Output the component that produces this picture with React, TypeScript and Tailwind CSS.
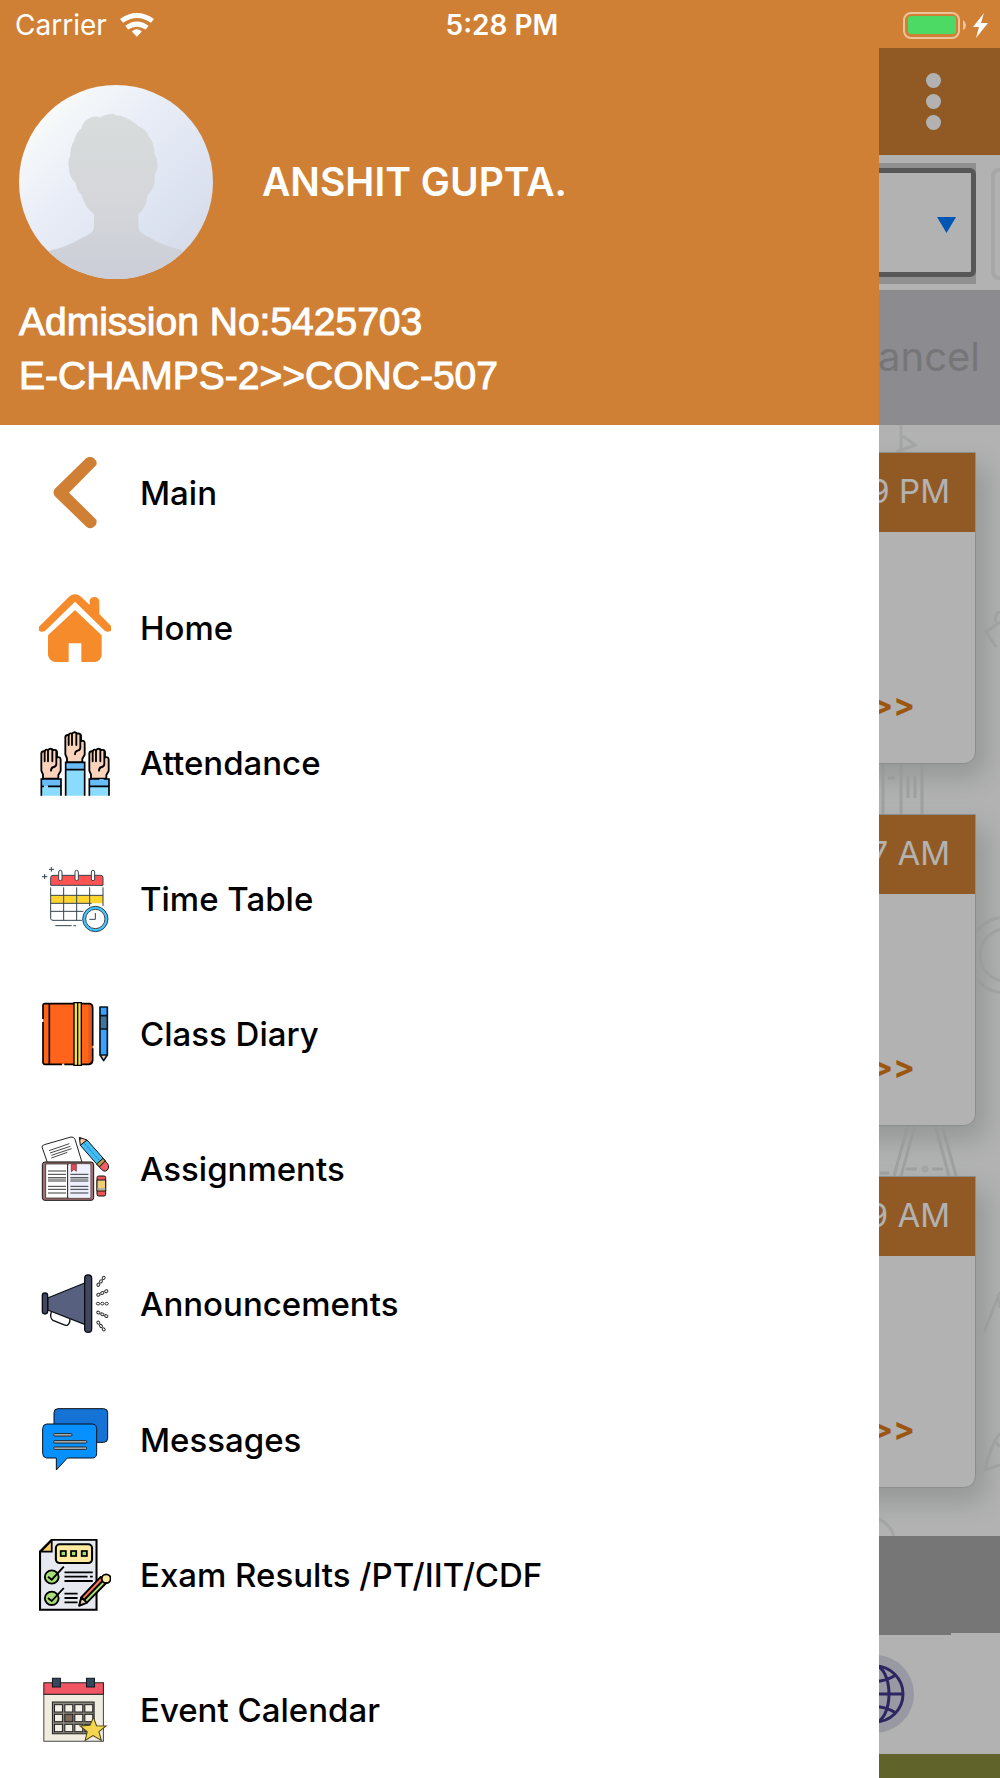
import type { ReactNode } from "react";

const INK = "#0b0f14";

function Icon({ box, children }: { box: string; children: ReactNode }) {
  return (
    <svg viewBox={box} preserveAspectRatio="none" className="size-[72px] shrink-0" fill="none" aria-hidden="true">
      {children}
    </svg>
  );
}

function MainIcon() {
  return (
    <Icon box="57 81 216 216">
      <path d="M199 84Q209 77 221 84Q233 94 229 105L147 188L229 269Q233 283 221 291Q210 299 200 291L104 198Q97 188 104 177Z" fill="#d08034" />
    </Icon>
  );
}

function HomeIcon() {
  return (
    <Icon box="57 486 216 216">
      <g fill="#f68b2c">
        <path d="M57 590L147 500Q165 486 183 500L209 525V511Q212 501 225 501Q237 503 238 515V552L273 588V602Q264 608 255 603L165 515L75 603Q64 608 57 602Z" />
        <path d="M165 540L245 616V676Q242 693 226 696H184V640H146V696H105Q88 693 84 676V616Z" />
      </g>
    </Icon>
  );
}

function Hand({ x, y }: { x: number; y: number }) {
  return (
    <g transform={`translate(${x} ${y})`} stroke="#000" strokeWidth="5.500" strokeLinejoin="round" strokeLinecap="round">
      <path d="M7 91V79L2 67V15Q3 8 12 9Q14 2 22 5Q30-3 38 5Q48 3 49 11V27Q60 24 60 34V68L53 80V91Z" fill="#fad3bc" />
      <path d="M12 10V39M22 6V39M35 6V39M47 10V45Q48 54 39 56Q31 58 31 67" />
    </g>
  );
}

function AttendanceIcon() {
  return (
    <Icon box="57 82 216 216">
      <Hand x={62} y={146} />
      <Hand x={134} y={97} />
      <Hand x={206} y={146} />
      <path d="M64 260H123V288H64ZM137 210H194V288H137ZM208 260H267V288H208Z" fill="#8adcff" />
      <path d="M64 238H123V260H64ZM137 188H194V210H137ZM208 238H267V260H208Z" fill="#68bdf9" />
      <path d="M64 288V238H123V288M64 260H72M84 260H123M137 288V188H194V288M137 210H194M208 288V238H238M251 238H267V288M208 260H267" stroke="#000" strokeWidth="5" />
    </Icon>
  );
}

function TimeTableIcon() {
  return (
    <Icon box="57 489 216 216">
      <path d="M92 556V533Q92 526 99 526H242Q249 526 249 533V556Z" fill="#ff5252" />
      <path d="M92 586H249V610H92Z" fill="#fed52f" />
      <path d="M92 556V533Q92 526 99 526H242Q249 526 249 533V556ZM92 562V655Q92 661 99 661H188M249 562V618M131 562V661M170 562V661M209 562V618M92 586H249M92 610H215M92 634H190M106 677H155M160 677H168M74 522V537M66 530H82M94 501V515M87 508H102" stroke="#35434d" strokeWidth="3" />
      {[116, 165, 214].map((x) => (
        <rect key={x} x={x} y="511" width="10" height="31" rx="5" fill="#fff" stroke="#35434d" strokeWidth="3" />
      ))}
      <circle cx="226" cy="657" r="41" fill="#fff" />
      <circle cx="226" cy="657" r="34" stroke="#40c4ff" strokeWidth="8" />
      <circle cx="226" cy="657" r="38" stroke="#35434d" strokeWidth="3" />
      <circle cx="226" cy="657" r="29" stroke="#35434d" strokeWidth="3" />
      <path d="M226 639V658H208" stroke="#35434d" strokeWidth="3" />
    </Icon>
  );
}

function DiaryIcon() {
  return (
    <Icon box="57 54 216 216">
      <rect x="69" y="71" width="150" height="182" rx="8" fill="#ff641a" />
      <path d="M205 71H210Q219 73 219 84V242Q217 252 209 253H205Z" fill="#e25a20" />
      <path d="M69 117V76Q69 71 75 71H208Q218 72 218 84V197M218 205V241Q217 251 207 253H133M126 253H75Q69 253 69 247V126M88 71V253" stroke="#000" strokeWidth="5" />
      <path d="M162 68H184V256H162Z" fill="#f5df4d" stroke="#000" strokeWidth="4" />
      <path d="M173 68V256" stroke="#000" strokeWidth="4" />
      <path d="M240 81H262V225L251 242L240 225Z" fill="#37a2ff" />
      <path d="M240 107H262V147H240Z" fill="#487399" />
      <path d="M240 225H262L251 242Z" fill="#f4c7a1" />
      <path d="M240 81H262V225L251 242L240 225ZM240 107H262M240 147H262M240 225H262" stroke="#071522" strokeWidth="5" strokeLinejoin="round" />
    </Icon>
  );
}

function AssignmentsIcon() {
  return (
    <Icon box="57 460 216 216">
      <path d="M82 548L66 502Q66 497 73 495L153 472Q162 471 165 479L186 548Z" fill="#fff" stroke="#222" strokeWidth="3" />
      <path d="M87 513L148 492M90 520L151 500M94 527L155 507M94 535L142 518" stroke="#222" strokeWidth="2.500" />
      <rect x="67" y="547" width="154" height="115" rx="8" fill="#a27070" stroke="#151515" strokeWidth="3" />
      <path d="M77 553H212V655H77Z" fill="#fff" stroke="#151515" strokeWidth="2" />
      <path d="M147 554H211V654H147Z" fill="#eef0ff" />
      <path d="M143 553V655" stroke="#151515" strokeWidth="3" />
      <path d="M84 574H138M84 584H138M84 594H138M84 604H138M84 620H138M84 629H138M84 640H138M151 584H205M151 594H205M151 604H205M151 620H205M151 629H205M151 640H205" stroke="#151515" strokeWidth="2.500" />
      <path d="M84 599H138M151 599H205" stroke="#999" strokeWidth="5" />
      <path d="M154 554H169V575L162 569L154 576Z" fill="#e34b50" stroke="#731d22" strokeWidth="2" />
      <g stroke="#151515" strokeWidth="3" strokeLinejoin="round">
        <path d="M178 473L201 481L181 497Z" fill="#f6c49e" />
        <path d="M201 481L256 543L237 561L181 497Z" fill="#44bdf5" />
        <path d="M191 489L247 552" stroke="#176287" strokeDasharray="3 3" />
        <path d="M249 536L256 544L238 562L230 553Z" fill="#b69b42" />
        <path d="M256 544Q272 559 262 571Q252 581 238 562Z" fill="#f25e65" />
        <rect x="231" y="589" width="26" height="60" rx="5" fill="#ef545a" />
        <path d="M231 601H257V634H231Z" fill="#edce75" />
        <path d="M232 628H256" stroke="#aaa" strokeWidth="5" />
      </g>
      <path d="M179 474L185 476L181 482Z" fill="#222" />
    </Icon>
  );
}

function AnnouncementsIcon() {
  const rays = [
    { x: 243, y: 96, r: -52 },
    { x: 247, y: 131, r: -24 },
    { x: 247, y: 163, r: 0 },
    { x: 247, y: 195, r: 24 },
    { x: 243, y: 230, r: 52 },
  ];
  return (
    <Icon box="57 56 216 216">
      <g stroke={INK} strokeWidth="4" strokeLinejoin="round">
        <path d="M98 184L150 206Q151 223 141 228Q137 229 131 226L99 213Q89 206 93 191Q94 186 98 184Z" fill="#fff" />
        <path d="M83 146L194 101V225L83 182Z" fill="#57617f" />
        <rect x="67" y="131" width="16" height="63" rx="8" fill="#40475f" />
        <rect x="194" y="77" width="21" height="172" rx="10" fill="#40475f" />
      </g>
      {rays.map((ray) => (
        <g key={ray.y} transform={`translate(${ray.x} ${ray.y}) rotate(${ray.r})`} stroke="#333" strokeWidth="3" fill="#fff">
          <ellipse cx="-13" rx="5" ry="4" />
          <ellipse cx="0" rx="5" ry="4" />
          <ellipse cx="13" rx="5" ry="4" />
        </g>
      ))}
    </Icon>
  );
}

function MessagesIcon() {
  return (
    <Icon box="57 462 216 216">
      <rect x="102" y="476" width="161" height="101" rx="12" fill="#1573d5" stroke={INK} strokeWidth="3" />
      <path d="M80 522H218Q230 523 230 535V611Q229 624 217 624H142L109 660V624H80Q68 622 68 610V535Q69 523 80 522Z" fill="#0790ff" stroke={INK} strokeWidth="3" />
      {[{ y: 551, w: 55 }, { y: 572, w: 99 }, { y: 591, w: 99 }].map((l) => (
        <rect key={l.y} x="101" y={l.y} width={l.w} height="7" rx="3" fill="#c1c4c7" stroke="#222" strokeWidth="3" />
      ))}
    </Icon>
  );
}

function ExamIcon() {
  return (
    <Icon box="55 58 209 216">
      <path d="M58 95L92 60H222V270H58Z" fill="#e6eaf0" stroke="#000" strokeWidth="6" />
      <path d="M60 96L92 62V96Z" fill="#f6cf67" stroke="#000" strokeWidth="5" />
      <rect x="104" y="74" width="105" height="56" rx="11" fill="#ffeaa0" stroke="#000" strokeWidth="6" />
      {[118, 148, 179].map((x) => (
        <rect key={x} x={x} y="94" width="15" height="15" fill="#a9e075" stroke="#000" strokeWidth="5" />
      ))}
      {[172, 236].map((y) => (
        <g key={y} stroke="#000" strokeWidth="5.500">
          <circle cx="92" cy={y} r="20" fill="#a9e075" />
          <path d={`M81 ${y - 1}L92 ${y + 8}L127 ${y - 31}`} />
        </g>
      ))}
      <path d="M129 158H211M129 171H196M203 171H211M129 184H211M129 222H167M129 235H167M129 248H167" stroke="#000" strokeWidth="5.500" />
      <g stroke="#000" strokeWidth="5.500" strokeLinejoin="round">
        <path d="M178 233L234 172L250 190L194 249L172 258Z" fill="#a9e075" />
        <path d="M178 233L234 172L242 181L186 241Z" fill="#ff735e" />
        <path d="M178 233L194 249L172 258Z" fill="#f7d6aa" />
        <circle cx="250" cy="177" r="13" fill="#ffeaa0" />
      </g>
    </Icon>
  );
}

function EventIcon() {
  return (
    <Icon box="55 464 209 216">
      <path d="M69 525H242V666H69Z" fill="#f0ecdf" stroke="#4a4a48" strokeWidth="3" />
      <path d="M69 490H242V525H69Z" fill="#f05563" stroke="#222" strokeWidth="3" />
      <path d="M94 477H117V503H94ZM193 477H216V503H193Z" fill="#33485f" stroke="#101820" strokeWidth="3" />
      <path d="M94 548H215V643H94Z" fill="#8b877b" stroke="#222" strokeWidth="3" />
      {[556, 585, 615].map((y) =>
        [100, 130, 159, 188].map((x) => (
          <rect key={`${x}-${y}`} x={x} y={y} width="23" height="22" fill={x === 130 && y === 585 ? "#806b5b" : "#f4f0e6"} stroke="#222" strokeWidth="3" />
        )),
      )}
      <path d="M213 594L222 619L250 620L229 637L236 663L212 649L189 663L195 637L174 620L203 618Z" fill="#f3d54e" stroke="#4e451e" strokeWidth="3" />
    </Icon>
  );
}

const menu: { label: string; icon: ReactNode }[] = [
  { label: "Main", icon: <MainIcon /> },
  { label: "Home", icon: <HomeIcon /> },
  { label: "Attendance", icon: <AttendanceIcon /> },
  { label: "Time Table", icon: <TimeTableIcon /> },
  { label: "Class Diary", icon: <DiaryIcon /> },
  { label: "Assignments", icon: <AssignmentsIcon /> },
  { label: "Announcements", icon: <AnnouncementsIcon /> },
  { label: "Messages", icon: <MessagesIcon /> },
  { label: "Exam Results /PT/IIT/CDF", icon: <ExamIcon /> },
  { label: "Event Calendar", icon: <EventIcon /> },
];

function StatusBar() {
  return (
    <div className="grid h-12 shrink-0 grid-cols-3 items-center bg-[#d08034] pt-[2px] pr-[11px] pl-[15px] text-white">
      <div className="flex items-center gap-[13px]">
        <span className="text-[28px] leading-8">Carrier</span>
        <svg viewBox="316 37 89 73" preserveAspectRatio="none" className="h-6 w-[34px]" fill="#fff" aria-label="Wi-Fi">
          <path d="M316 55Q360 19 405 55L397 67Q360 38 324 67ZM330 76Q360 50 391 76L383 87Q360 70 337 87ZM347 93Q360 80 373 93L360 109Z" />
        </svg>
      </div>
      <span className="text-center text-[28px] leading-8 font-semibold">5:28 PM</span>
      <div className="flex items-center justify-end">
        <svg viewBox="903 10 86 28" className="h-7 w-[86px]" fill="none" aria-label="Battery charging">
          <rect x="904" y="12" width="55" height="25" rx="7" stroke="#ecc39b" strokeWidth="2" />
          <rect x="908" y="15" width="48" height="18" rx="3" fill="#4cd964" />
          <path d="M963 19Q966 21 966 24Q966 28 963 29Z" fill="#ecc39b" />
          <path d="M984 12L973 26H979L976 37L988 22H981Z" fill="#fff" />
        </svg>
      </div>
    </div>
  );
}

function Avatar() {
  return (
    <svg viewBox="50 253 507 580" preserveAspectRatio="none" className="size-[194px] shrink-0 rounded-full" role="img" aria-label="Profile photo">
      <defs>
        <linearGradient id="sky" x1="0" y1="0" x2="1" y2="1">
          <stop offset="0.1" stopColor="#fafcfa" />
          <stop offset="0.4" stopColor="#e9edf7" />
          <stop offset="0.7" stopColor="#dce3f0" />
          <stop offset="1" stopColor="#d5d6e4" />
        </linearGradient>
        <linearGradient id="person" x1="0" y1="0" x2="0" y2="1">
          <stop offset="0" stopColor="#d8dcdc" />
          <stop offset="0.5" stopColor="#d5d7da" />
          <stop offset="1" stopColor="#cbced8" />
        </linearGradient>
      </defs>
      <rect x="50" y="253" width="507" height="580" fill="url(#sky)" />
      <path d="M232 354Q245 343 262 350Q280 339 297 339Q304 346 316 345Q342 355 363 377Q382 384 389 406Q404 425 404 460Q416 480 411 505Q403 522 404 550Q397 572 386 583Q381 623 362 639V680Q366 699 392 709Q422 733 475 746L500 833H110L130 748Q171 739 218 708Q246 696 246 675V640Q221 616 213 580Q202 573 198 546Q180 528 181 499Q176 482 184 465Q184 439 194 420Q198 396 213 382Q219 360 232 354Z" fill="url(#person)" />
    </svg>
  );
}

function Drawer() {
  return (
    <aside className="absolute inset-y-0 left-0 flex w-[87.9%] flex-col bg-white">
      <header className="bg-[#d08034] px-[19px] pt-[37px] pb-[22px] text-white">
        <div className="flex items-center gap-[49px]">
          <Avatar />
          <h1 className="text-[39px] leading-[54px] font-semibold">ANSHIT GUPTA.</h1>
        </div>
        <div className="mt-4 font-['Liberation_Sans',sans-serif] text-[39px] leading-[54px] [-webkit-text-stroke:1px_white]">
          <p>Admission No:5425703</p>
          <p>E-CHAMPS-2&gt;&gt;CONC-507</p>
        </div>
      </header>
      <nav className="flex flex-1 flex-col">
        {menu.map((item) => (
          <a key={item.label} href="#" className="flex min-h-[100px] flex-1 items-center gap-[29px] pl-[39px] text-[33px] leading-10 font-medium text-black">
            {item.icon}
            <span>{item.label}</span>
          </a>
        ))}
      </nav>
    </aside>
  );
}

function Doodles() {
  return (
    <svg viewBox="879 425 121 1111" className="absolute top-0 right-0 h-[1111px] w-[121px]" fill="none" stroke="#ebedec" strokeWidth="3" aria-hidden="true">
      <path d="M901 425V452M903 436L915 445L896 452" />
      <path d="M1000 622L986 632L996 647M995 622Q996 611 1000 612" />
      <path d="M883 760V820M901 760V820M922 760V820M908 776V798M915 776V798M888 778H895" stroke="#e4e7e6" />
      <circle cx="1006" cy="955" r="38" />
      <circle cx="1006" cy="955" r="26" />
      <path d="M908 1125L894 1176M915 1125L901 1176M935 1125L949 1176M942 1125L956 1176M906 1169H917M932 1169H943M880 1173H889" stroke="#e4e7e6" />
      <circle cx="925" cy="1169" r="2" />
      <path d="M1000 1292L984 1332M998 1295L1000 1308M1000 1433Q990 1446 985 1470L1000 1465M995 1441L1000 1447" />
      <path d="M879 1519Q890 1524 894 1536" />
    </svg>
  );
}

function Card({ time }: { time: string }) {
  return (
    <article className="relative mr-6 ml-6 flex h-[312px] flex-col justify-between rounded-b-xl border border-[#c8cccb] bg-white shadow-[10px_14px_28px_#d3d9d6]">
      <div className="flex h-[79px] items-center justify-end bg-[#d08034] pr-[25px] pb-[3px] text-[33px] leading-10 text-white">{time}</div>
      <a href="#" className="self-end pr-[60px] pb-[38px] text-[32px] leading-10 font-bold text-[#e17c17]">&gt;&gt;</a>
    </article>
  );
}

function Page() {
  return (
    <div className="flex flex-1 flex-col bg-white">
      <div className="flex h-[107px] items-center justify-end bg-[#d08034] pr-[57px]">
        <button aria-label="More options" className="flex w-5 flex-col items-center gap-[6px]">
          <span className="size-[15px] rounded-full bg-white" />
          <span className="size-[15px] rounded-full bg-white" />
          <span className="size-[15px] rounded-full bg-white" />
        </button>
      </div>
      <div className="flex h-[135px] items-center gap-[15px] pt-[2px] pl-6">
        <div className="relative h-[121px] flex-1 bg-[#cfcfcf] pt-[5px]">
          <select aria-label="Filter" className="h-[109px] w-full appearance-none rounded-md border-[5px] border-[#7d7d7d] bg-white">
            <option></option>
          </select>
          <svg viewBox="0 0 19 16" className="pointer-events-none absolute top-[54px] right-[20px] h-4 w-[19px]" aria-hidden="true">
            <path d="M0 0H19L9.500 16Z" fill="#007cff" />
          </svg>
        </div>
        <div className="h-[112px] w-[9px] rounded-l-lg border-4 border-r-0 border-[#efefef]" />
      </div>
      <div className="flex h-[135px] items-center justify-end bg-[#c9c8ce] pr-[20px] pb-[2px]">
        <button className="text-[40px] leading-[48px] text-[#a9a9ad]">Cancel</button>
      </div>
      <section className="relative flex flex-1 flex-col gap-[50px] overflow-hidden pt-[27px] pb-[48px]">
        <Doodles />
        <Card time="9 PM" />
        <Card time="7 AM" />
        <Card time="9 AM" />
      </section>
      <div className="h-[97px] bg-[#a9a9a9]" />
      <footer>
        <div className="flex h-[121px] flex-col">
          <div className="h-[2px] w-[95.1%] bg-[#a9a9a9]" />
          <button aria-label="Website" className="mt-5 mr-[86px] self-end">
            <svg viewBox="0 0 78 78" className="size-[78px]" fill="none" stroke="#40388b" strokeWidth="3">
              <circle cx="39" cy="39" r="39" fill="#dadbea" stroke="none" />
              <circle cx="39" cy="39" r="28" />
              <ellipse cx="39" cy="39" rx="14" ry="28" />
              <path d="M39 11V67M11 39H67M18 20Q39 33 60 20M18 58Q39 45 60 58" />
            </svg>
          </button>
        </div>
        <div className="h-6 bg-[#8b903d]" />
      </footer>
    </div>
  );
}

export default function App() {
  return (
    <div className="flex min-h-screen flex-col overflow-hidden bg-white font-['Inter',sans-serif]">
      <StatusBar />
      <main className="relative flex flex-1 flex-col">
        <Page />
        <div className="absolute inset-0 bg-black/30" />
        <Drawer />
      </main>
    </div>
  );
}
